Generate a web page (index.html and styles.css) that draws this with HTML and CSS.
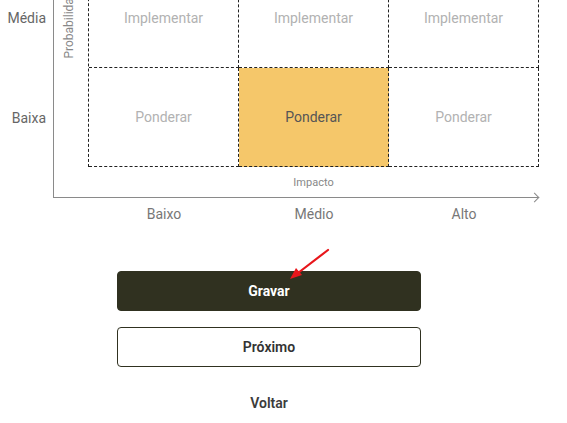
FILE: index.html
```html
<!doctype html>
<html lang="pt">
<head>
	<meta charset="UTF-8">
	<title>Matriz de risco</title>
	<link rel="stylesheet" href="styles.css">
</head>
<body>
	<div class="page">
		<div class="chart">
			<div class="axis"></div>
			<div class="row-label row-1">Média</div>
			<div class="row-label row-2">Baixa</div>
			<div class="y-title">Probabilidade</div>
			<div class="cells">
				<div class="cell">Implementar</div>
				<div class="cell">Implementar</div>
				<div class="cell">Implementar</div>
				<div class="cell">Ponderar</div>
				<div class="cell on">Ponderar</div>
				<div class="cell">Ponderar</div>
			</div>
			<div class="x-title">Impacto</div>
			<div class="x-labels">
				<span>Baixo</span>
				<span>Médio</span>
				<span>Alto</span>
			</div>
		</div>
		<div class="actions">
			<button class="btn btn-dark">Gravar</button>
			<button class="btn btn-line">Próximo</button>
			<button class="btn btn-text">Voltar</button>
			<svg class="pointer" width="60" height="50" viewBox="0 0 60 50">
				<line x1="54" y1="3" x2="24" y2="26" stroke="#e8161b" stroke-width="2.2" stroke-linecap="round"/>
				<polygon points="16,32 22,21 28,28" fill="#e8161b"/>
			</svg>
		</div>
	</div>
</body>
</html>
```

FILE: styles.css
```css
*{padding: 0; margin: 0; box-sizing: border-box;}
body{
	font-family: Roboto, "Liberation Sans", sans-serif;
	background: #fff; color: #333;
}
.page{width: 538px;}

/* matriz */
.chart{
	display: grid; margin-top: -32px;
	grid-template-columns: 53px 35px 451px;
	grid-template-rows: 100px 99px 31px auto;
}
.axis{
	grid-column: 2 / 4; grid-row: 1 / 4;
	border-left: 1px solid #8a8a8a; border-bottom: 1px solid #8a8a8a;
	margin-right: 1px; position: relative;
}
.axis::after{
	content: ""; position: absolute; right: 0; bottom: -4px;
	width: 6px; height: 6px;
	border-top: 1px solid #8a8a8a; border-right: 1px solid #8a8a8a;
	transform: rotate(45deg);
}
.row-label{
	grid-column: 1; display: flex; align-items: center; justify-content: flex-end;
	padding-right: 7px; font-size: 14px; color: #666;
}
.row-1{grid-row: 1;}
.row-2{grid-row: 2;}
.y-title{
	grid-column: 2; grid-row: 1 / 3; justify-self: center; align-self: start;
	margin: 17px 0 0 -3px;
	writing-mode: vertical-rl; transform: rotate(180deg);
	font-size: 12px; color: #888;
}
.cells{
	grid-column: 3; grid-row: 1 / 3;
	display: grid; grid-template-columns: repeat(3, 150px); grid-template-rows: 99px 99px;
	border-top: 1px dashed #222; border-left: 1px dashed #222;
}
.cell{
	display: flex; align-items: center; justify-content: center;
	border-right: 1px dashed #222; border-bottom: 1px dashed #222;
	font-size: 14px; color: #b2b2b2;
}
.cell.on{background: #f5c76a; color: #555;}
.x-title{
	grid-column: 3; grid-row: 3; justify-self: center; align-self: end;
	padding-bottom: 9px; font-size: 11px; color: #888;
}
.x-labels{
	grid-column: 3; grid-row: 4;
	display: grid; grid-template-columns: repeat(3, 150px);
	padding: 8px 0 0 1px; font-size: 14px; color: #777; line-height: 16px;
}
.x-labels span{text-align: center;}

/* botoes */
.actions{
	width: 304px; margin: 49px auto 0; position: relative;
	display: flex; flex-direction: column; gap: 16px;
}
.btn{
	height: 40px; font-family: inherit; font-size: 14px; font-weight: 700;
	border-radius: 4px; cursor: pointer;
}
.btn-dark{background: #303120; color: #fff; border: 1px solid #303120;}
.btn-line{background: #fff; color: #333; border: 1px solid #303120; font-weight: 600;}
.btn-text{background: none; border: none; color: #3c3c3c; font-weight: 600;}
.pointer{position: absolute; left: 157px; top: -24px;}
```
